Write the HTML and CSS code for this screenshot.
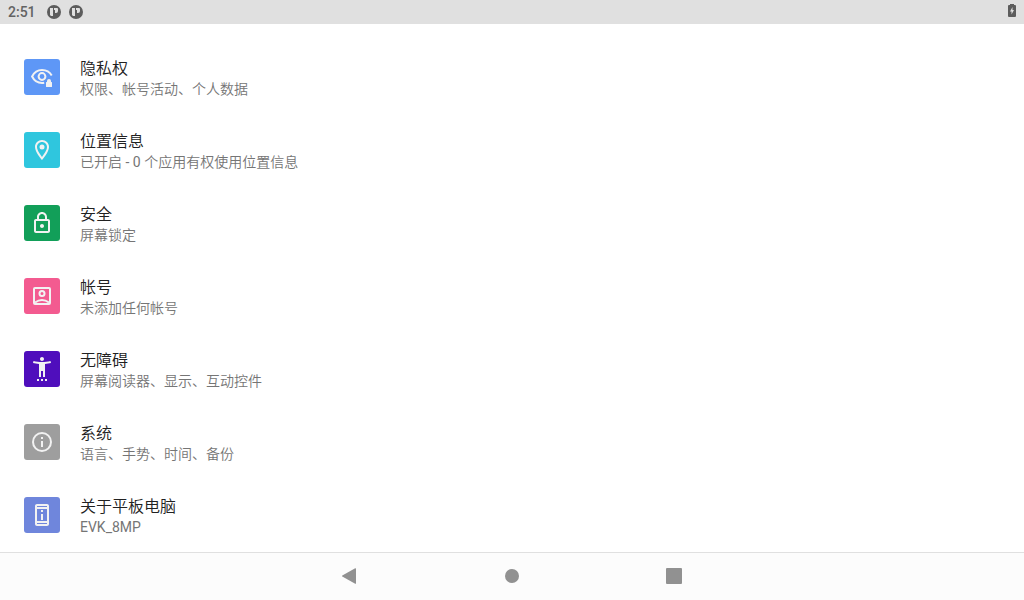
FILE: index.html
```html
<!DOCTYPE html>
<html lang="zh-CN">
<head>
    <meta charset="UTF-8">
    <meta name="viewport" content="width=device-width, initial-scale=1.0">
    <title>设置</title>
    <link rel="stylesheet" href="styles.css">
</head>
<body>
    <header class="status-bar">
        <span class="clock">2:51</span>
        <svg class="notice" viewBox="0 0 14 14"><circle cx="7" cy="7" r="7"/><path class="light" d="M3 3h3v8H4L3 10zM7 3h3a1 1 0 0 1 1 1v2a2 2 0 0 1-2 2H8v-3H7z"/></svg>
        <svg class="notice" viewBox="0 0 14 14"><circle cx="7" cy="7" r="7"/><path class="light" d="M3 3h3v8H4L3 10zM7 3h3a1 1 0 0 1 1 1v2a2 2 0 0 1-2 2H8v-3H7z"/></svg>
        <svg class="battery" viewBox="0 0 8 13"><path d="M2 0h4v1h1a1 1 0 0 1 1 1v10a1 1 0 0 1-1 1H1a1 1 0 0 1-1-1V2a1 1 0 0 1 1-1h1z"/><path class="light" d="M4.500 3v3H6l-2.500 4.500V7.500H2z"/></svg>
    </header>

    <main class="settings">
        <a class="item" href="#privacy">
            <span class="icon privacy">
                <svg viewBox="0 0 24 24"><path class="line" d="M21.700 10.500C19.900 7.200 16.300 5 12 5S4.100 7.500 2.100 11.500C4.100 15.500 7.700 18 12 18q1.200 0 2.200-.2"/><circle class="line" cx="12" cy="11.500" r="3.400"/><path d="M17 17V16a2 2 0 0 1 4 0v1h.5q.5 0 .5.5v4q0 .5-.5.5h-5q-.5 0-.5-.5v-4q0-.5.5-.5z"/></svg>
            </span>
            <span class="text">
                <span class="title">隐私权</span>
                <span class="summary">权限、帐号活动、个人数据</span>
            </span>
        </a>
        <a class="item" href="#location">
            <span class="icon location">
                <svg viewBox="0 0 24 24"><path d="M12 2C8.130 2 5 5.130 5 9c0 5.250 7 13 7 13s7-7.750 7-13c0-3.870-3.130-7-7-7zM7 9c0-2.760 2.240-5 5-5s5 2.240 5 5c0 2.880-2.880 7.190-5 9.880C9.920 16.210 7 11.850 7 9z"/><circle cx="12" cy="9" r="2.500"/></svg>
            </span>
            <span class="text">
                <span class="title">位置信息</span>
                <span class="summary">已开启 - 0 个应用有权使用位置信息</span>
            </span>
        </a>
        <a class="item" href="#security">
            <span class="icon security">
                <svg viewBox="0 0 24 24"><path d="M18 8h-1V6c0-2.760-2.240-5-5-5S7 3.240 7 6v2H6c-1.100 0-2 .9-2 2v10c0 1.100.9 2 2 2h12c1.100 0 2-.9 2-2V10c0-1.100-.9-2-2-2zM9 6c0-1.660 1.340-3 3-3s3 1.340 3 3v2H9V6zm9 14H6V10h12v10zm-6-3c1.100 0 2-.9 2-2s-.9-2-2-2-2 .9-2 2 .9 2 2 2z"/></svg>
            </span>
            <span class="text">
                <span class="title">安全</span>
                <span class="summary">屏幕锁定</span>
            </span>
        </a>
        <a class="item" href="#accounts">
            <span class="icon accounts">
                <svg viewBox="0 0 24 24"><rect class="line" x="4" y="4" width="16" height="16" rx="1"/><path class="line" d="M5 18.500q7-5 14 0"/><circle class="line" cx="12" cy="9.500" r="2.500"/></svg>
            </span>
            <span class="text">
                <span class="title">帐号</span>
                <span class="summary">未添加任何帐号</span>
            </span>
        </a>
        <a class="item" href="#accessibility">
            <span class="icon accessibility">
                <svg viewBox="0 0 24 24"><path d="M20.500 4c-2.610.7-5.670 1-8.500 1s-5.890-.3-8.500-1L3 6c1.860.5 4 .83 6 1v13h2v-6h2v6h2V7c2-.17 4.140-.5 6-1zM12 4c1.100 0 2-.9 2-2s-.9-2-2-2-2 .9-2 2 .9 2 2 2zM7 24h2v-2H7zM11 24h2v-2h-2zM15 24h2v-2h-2z"/><path d="M11 8h2v6h-2z"/></svg>
            </span>
            <span class="text">
                <span class="title">无障碍</span>
                <span class="summary">屏幕阅读器、显示、互动控件</span>
            </span>
        </a>
        <a class="item" href="#system">
            <span class="icon system">
                <svg viewBox="0 0 24 24"><circle class="line" cx="12" cy="12" r="9"/><path d="M11 7h2v2h-2zM11 11h2v6h-2z"/></svg>
            </span>
            <span class="text">
                <span class="title">系统</span>
                <span class="summary">语言、手势、时间、备份</span>
            </span>
        </a>
        <a class="item" href="#about">
            <span class="icon about">
                <svg viewBox="0 0 24 24"><path d="M11 7h2v2h-2zM11 11h2v6h-2zM17 1H7c-1.100 0-2 .9-2 2v18c0 1.100.9 2 2 2h10c1.100 0 2-.9 2-2V3c0-1.100-.9-2-2-2zm0 20H7v-1h10v1zm0-3H7V6h10v12zm0-14H7V3h10v1z"/></svg>
            </span>
            <span class="text">
                <span class="title">关于平板电脑</span>
                <span class="summary">EVK_8MP</span>
            </span>
        </a>
    </main>

    <nav class="nav-bar">
        <button class="nav-btn" type="button" aria-label="返回">
            <svg viewBox="0 0 16 16"><path d="M13.200.2Q14 0 14 .8v14.400q0 .8-.8.600L.300 8.600q-.8-.6 0-1.200z"/></svg>
        </button>
        <button class="nav-btn" type="button" aria-label="主屏幕">
            <svg viewBox="0 0 16 16"><circle cx="8" cy="8" r="7"/></svg>
        </button>
        <button class="nav-btn" type="button" aria-label="概览">
            <svg viewBox="0 0 16 16"><rect width="16" height="16" rx="1"/></svg>
        </button>
    </nav>
</body>
</html>
```
FILE: styles.css
```css
* {
    box-sizing: border-box;
}

body {
    margin: 0;
    min-height: 100vh;
    display: flex;
    flex-direction: column;
    background: #fff;
    color: #212121;
    font-family: Roboto, "Noto Sans CJK SC DemiLight", "Noto Sans CJK SC", sans-serif;
}

.status-bar {
    display: flex;
    align-items: center;
    gap: 8px;
    height: 24px;
    padding: 0 8px;
    background: #e0e0e0;
    color: #636363;
    fill: #5c5c5c;
}

.clock {
    margin-right: 3px;
    font-size: 14px;
    font-weight: 500;
}

.notice {
    width: 14px;
    height: 14px;
}

.battery {
    width: 8px;
    height: 13px;
    margin-left: auto;
    margin-bottom: 3px;
}

.light {
    fill: #e0e0e0;
}

.settings {
    flex: 1;
    padding-top: 17px;
}

.item {
    display: flex;
    gap: 20px;
    padding: 17px 24px 15px;
    color: inherit;
    text-decoration: none;
}

.icon {
    display: flex;
    align-items: center;
    justify-content: center;
    width: 36px;
    height: 36px;
    margin-top: 1px;
    border-radius: 3px;
}

.icon svg {
    width: 24px;
    height: 24px;
    fill: #f2f2f2;
}

.icon .line {
    fill: none;
    stroke: #f2f2f2;
    stroke-width: 2;
}

.privacy {
    background: #5e97f6;
}

.location {
    background: #2fc6de;
}

.security {
    background: #129f59;
}

.accounts {
    background: #f35b90;
}

.accessibility {
    background: #4f0ebc;
}

.system {
    background: #9e9e9e;
}

.about {
    background: #6f86dc;
}

.text {
    display: flex;
    flex-direction: column;
}

.title {
    font-size: 16px;
    line-height: 21px;
}

.summary {
    color: #757575;
    font-size: 14px;
    line-height: 20px;
}

.nav-bar {
    display: flex;
    justify-content: center;
    height: 48px;
    padding-bottom: 1px;
    border-top: 1px solid #e0e0e0;
    background: #fcfcfc;
}

.nav-btn {
    display: flex;
    align-items: center;
    justify-content: center;
    width: 162px;
    padding: 0;
    border: none;
    background: none;
}

.nav-btn svg {
    width: 16px;
    height: 16px;
    fill: #919191;
}
```
